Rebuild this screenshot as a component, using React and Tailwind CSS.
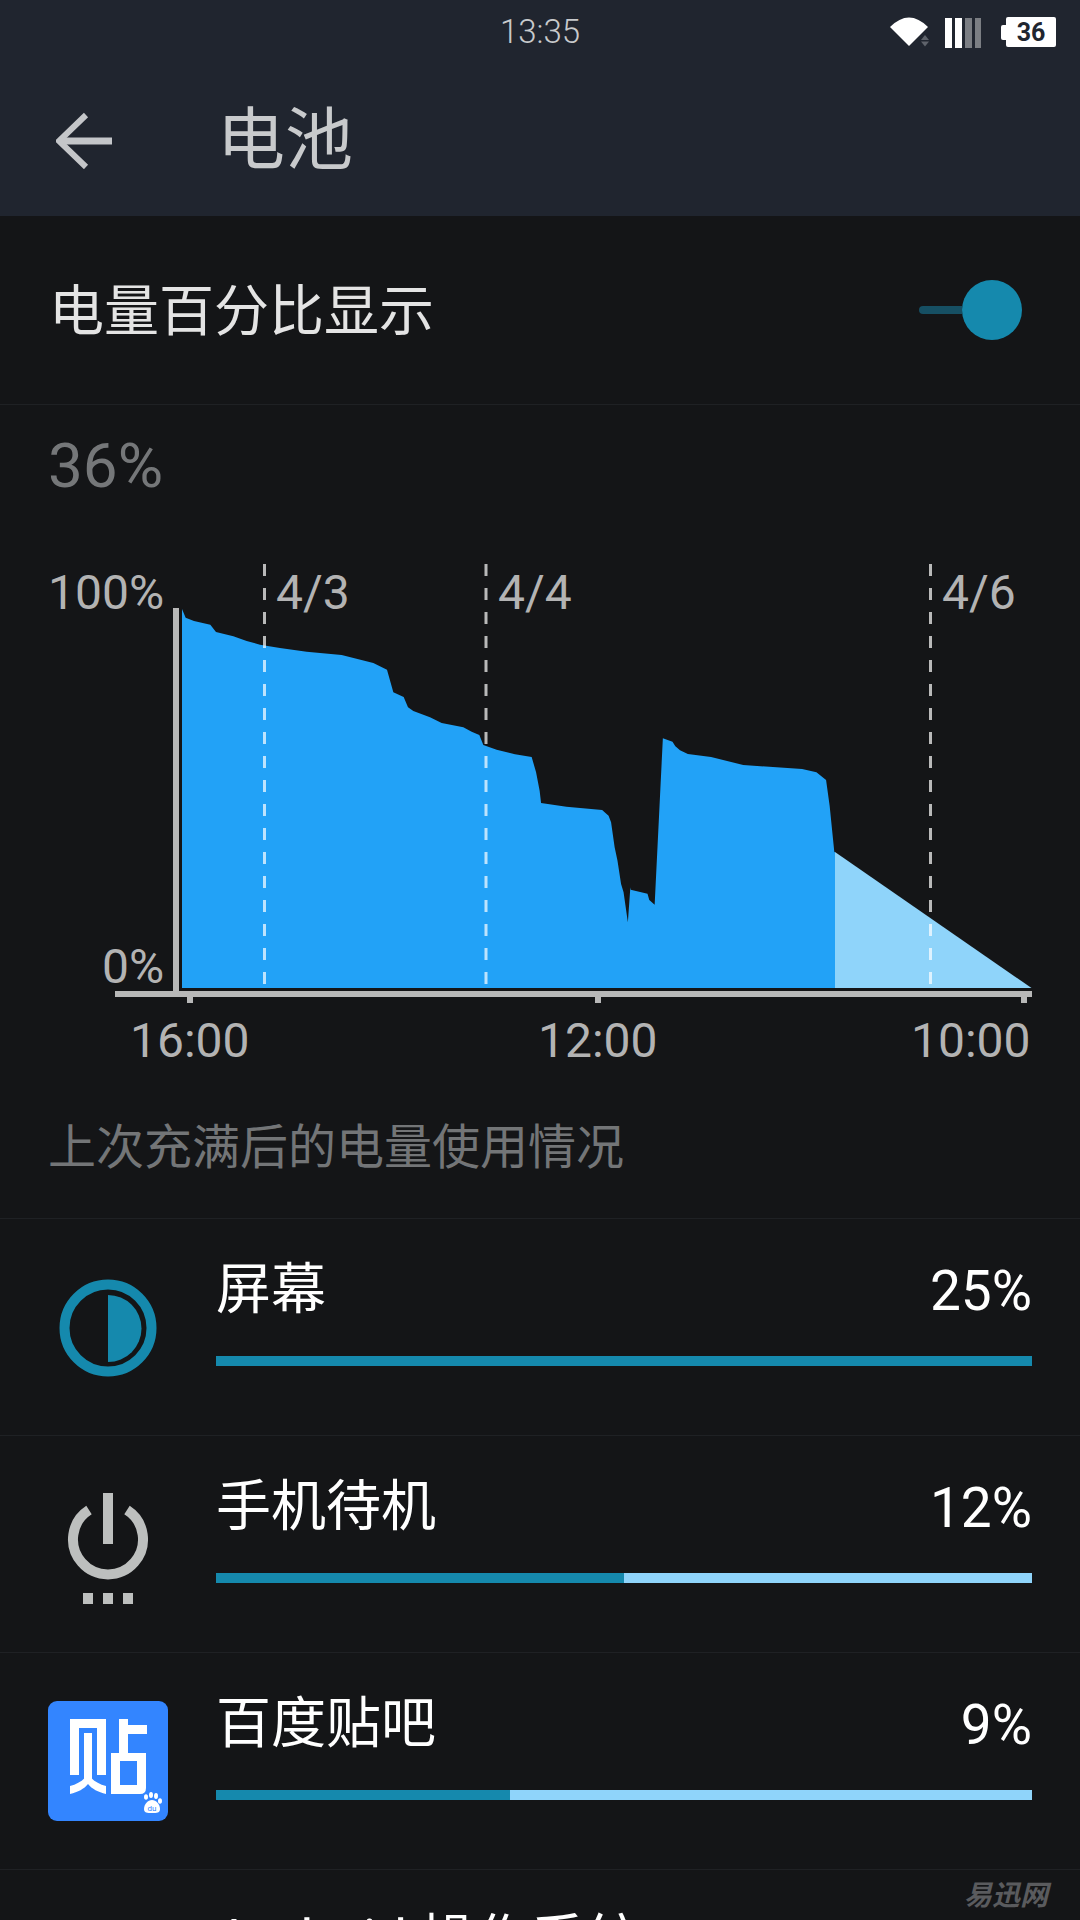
const left = [[456,210],[467,236],[492,246],[541,257],[558,279],[610,292],[650,306],[690,317],[750,327],[830,338],[935,348],[1030,372],[1071,392],[1090,460],[1121,474],[1134,505],[1150,516],[1200,535],[1235,552],[1300,565],[1325,578],[1348,588],[1360,618],[1400,632],[1455,646],[1505,654]];
const right = [[45,700],[55,755],[59,792],[130,803],[230,813],[248,830],[255,850],[265,925],[273,965],[283,1035],[290,1060],[302,1150],[309,1045],[310,1052],[357,1064],[362,1083],[377,1097],[400,598],[427,608],[435,622],[448,634],[470,645],[535,654],[625,678],[790,690],[830,700],[857,723],[867,800],[880,938],[882,940]];
const pts = [
  ...left.map(([x, y]) => [30 + x / 3, 540 + y / 3]),
  ...right.map(([x, y]) => [520 + x / 2.8, 540 + y / 3]),
  [835, 989],
  [182, 989],
].map((p) => p.join(",")).join(" ");

const font = "font-['Roboto','Noto_Sans_CJK_SC',sans-serif]";

function Back() {
  return (
    <svg width="56" height="58" viewBox="0 0 56 58" className="shrink-0">
      <path d="M56 30H4" stroke="#c4c6c9" strokeWidth="7" fill="none" />
      <path d="M30 4 L3 30 L30 56" stroke="#c4c6c9" strokeWidth="6" fill="none" />
    </svg>
  );
}

function StatusIcons() {
  return (
    <div className="flex items-start justify-end pr-[24px] pt-[17px]">
      <svg width="40" height="30" viewBox="0 0 40 30" className="shrink-0">
        <path d="M0 10 Q19 -9 38 10 L19 29 Z" fill="#fff" />
        <path d="M35 18 L39 23 L31 23 Z" fill="#5f636b" />
        <path d="M31 24.500 L39 24.500 L35 29.500 Z" fill="#5f636b" />
      </svg>
      <svg width="36" height="30" viewBox="0 0 36 30" className="ml-[15px] mt-[1px] shrink-0">
        <rect x="0" width="7" height="30" fill="#fff" />
        <rect x="10" width="7" height="30" fill="#fff" />
        <rect x="20" width="7" height="30" fill="#7b7e83" />
        <rect x="30" width="6" height="30" fill="#7b7e83" />
      </svg>
      <div className="ml-[20px] flex items-center">
        <div className="h-[15px] w-[5px] rounded-l-[2px] bg-white" />
        <div className="flex h-[30px] w-[50px] items-center justify-center rounded-[2px] bg-white font-['Roboto',sans-serif] text-[25px] font-bold leading-none text-[#20252f]">
          36
        </div>
      </div>
    </div>
  );
}

function Chart() {
  const lines = [264.5, 486, 930.5];
  return (
    <div className="relative h-[530px] w-full">
      <svg width="1080" height="530" viewBox="0 540 1080 530" className="block">
        <polygon points={pts} fill="#22a2f7" />
        <polygon points="835,853 1031.500,989 835,989" fill="#8fd4fa" />
        {lines.map((x) => (
          <line key={x} x1={x} x2={x} y1="565" y2="985" stroke="#ffffff" strokeOpacity="0.7" strokeWidth="3" strokeDasharray="12 12" />
        ))}
        <rect x="173" y="609" width="6" height="388" fill="#b8b8b8" />
        <rect x="115" y="992" width="917" height="6" fill="#b8b8b8" />
        <rect x="187" y="998" width="6" height="6" fill="#b8b8b8" />
        <rect x="595" y="998" width="6" height="6" fill="#b8b8b8" />
        <rect x="1021" y="998" width="6" height="6" fill="#b8b8b8" />
      </svg>
      <span className="absolute left-[48px] top-[30px] text-[48px] leading-[48px] text-[#b3b3b3]">100%</span>
      <span className="absolute left-[102px] top-[404px] text-[48px] leading-[48px] text-[#b3b3b3]">0%</span>
      <span className="absolute left-[276px] top-[30px] text-[48px] leading-[48px] text-[#b3b3b3]">4/3</span>
      <span className="absolute left-[498px] top-[30px] text-[48px] leading-[48px] text-[#b3b3b3]">4/4</span>
      <span className="absolute left-[942px] top-[30px] text-[48px] leading-[48px] text-[#b3b3b3]">4/6</span>
      <span className="absolute left-[130px] top-[478px] text-[48px] leading-[48px] text-[#b3b3b3]">16:00</span>
      <span className="absolute left-[538px] top-[478px] text-[48px] leading-[48px] text-[#b3b3b3]">12:00</span>
      <span className="absolute left-[911px] top-[478px] text-[48px] leading-[48px] text-[#b3b3b3]">10:00</span>
    </div>
  );
}

function ScreenIcon() {
  return (
    <svg width="120" height="120" viewBox="0 0 120 120" className="shrink-0">
      <circle cx="60" cy="61" r="43.500" fill="none" stroke="#1589ad" strokeWidth="10" />
      <path d="M60 28 A33.500 33.500 0 0 1 60 95 Z" fill="#1589ad" />
    </svg>
  );
}

function PowerIcon() {
  return (
    <svg width="120" height="120" viewBox="0 0 120 120" className="shrink-0">
      <path d="M41 26 A35 35 0 1 0 79 26" fill="none" stroke="#bdbfbe" strokeWidth="10" />
      <rect x="55" y="9" width="10" height="51" fill="#bdbfbe" />
      <rect x="35" y="109" width="10" height="11" fill="#bdbfbe" />
      <rect x="55" y="109" width="10" height="11" fill="#bdbfbe" />
      <rect x="75" y="109" width="10" height="11" fill="#bdbfbe" />
    </svg>
  );
}

function TiebaIcon() {
  return (
    <svg width="120" height="120" viewBox="0 0 120 120" className="shrink-0">
      <rect width="120" height="120" rx="9" fill="#3385ff" />
      <path d="M22 18 H58 V74 H49 V27 H31 V74 H22 Z" fill="#fff" />
      <rect x="36" y="32" width="8" height="50" fill="#fff" />
      <path d="M22 93 V85 C30 83 36 79 40 73 C44 79 50 83 58 85 V93 C50 91 44 88 40 83 C36 88 30 91 22 93 Z" fill="#fff" />
      <rect x="71" y="18" width="9" height="38" fill="#fff" />
      <rect x="80" y="24" width="19" height="9" fill="#fff" />
      <path d="M63 52 H98 V87 Q98 93 92 93 H63 Z M72 60 V84 H89 V60 Z" fill="#fff" fillRule="evenodd" />
      <ellipse cx="98" cy="96" rx="2" ry="2.800" fill="#fff" />
      <ellipse cx="103" cy="94" rx="2" ry="3" fill="#fff" />
      <ellipse cx="108" cy="95" rx="2" ry="3" fill="#fff" />
      <ellipse cx="112" cy="100" rx="2" ry="2.800" fill="#fff" />
      <path d="M96 108 C96 103 100 99 104 99 C108 99 112 103 112 108 C112 112 109 112 104 112 C99 112 96 112 96 108 Z" fill="#fff" />
      <text x="104" y="110" textAnchor="middle" fontSize="8" fontFamily="Roboto, sans-serif" fill="#3385ff">du</text>
    </svg>
  );
}

function Row({ icon, title, pct, split }) {
  return (
    <div className="flex h-[217px] shrink-0 items-center border-t border-[#1f2124] pl-[48px] pr-[48px]">
      {icon}
      <div className="ml-[48px] flex min-w-0 flex-1 flex-col self-stretch pt-[38px]">
        <div className="flex h-[64px] items-center justify-between text-[55px] leading-[64px] text-white">
          <span>{title}</span>
          {pct && <span className="translate-y-[2px]">{pct}</span>}
        </div>
        {pct && (
          <div className="mt-[35px] flex h-[10px] bg-[#8fd4fa]">
            <div className={split}></div>
          </div>
        )}
      </div>
    </div>
  );
}

export default function App() {
  return (
    <div className={`relative flex h-[1920px] w-[1080px] flex-col overflow-hidden bg-[#141517] ${font}`}>
      <header className="h-[216px] shrink-0 bg-[#20252f]">
        <div className="grid h-[64px] grid-cols-[1fr_auto_1fr]">
          <div />
          <div className="pt-[13px] text-[33px] font-light leading-[38px] text-[#c8cacc]">13:35</div>
          <StatusIcons />
        </div>
        <div className="flex h-[152px] items-center pl-[56px]">
          <Back />
          <div className="ml-[105px] translate-y-[1px] text-[68px] leading-[76px] text-[#c8cacc]">电池</div>
        </div>
      </header>

      <div className="flex h-[189px] shrink-0 items-center justify-between border-b border-[#1f2124] pl-[49px] pr-[58px]">
        <span className="translate-y-[1px] text-[55px] leading-[64px] text-[#e4e4e4]">电量百分比显示</span>
        <div className="flex items-center">
          <div className="h-[8px] w-[43px] rounded-l-full bg-[#164f63]" />
          <div className="h-[60px] w-[60px] rounded-full bg-[#1589ad]" />
        </div>
      </div>

      <div className="h-[134px] shrink-0 pl-[48px] pt-[25px] text-[62px] leading-[72px] text-[#757779]">36%</div>

      <Chart />

      <div className="h-[149px] shrink-0 pl-[48px] pt-[47px] text-[48px] leading-[64px] text-[#737577]">
        上次充满后的电量使用情况
      </div>

      <Row icon={<ScreenIcon />} title="屏幕" pct="25%" split="w-full bg-[#1589ad]" />
      <Row icon={<PowerIcon />} title="手机待机" pct="12%" split="w-1/2 bg-[#1589ad]" />
      <Row icon={<TiebaIcon />} title="百度贴吧" pct="9%" split="w-[294px] bg-[#1589ad]" />
      <Row icon={<div className="h-[120px] w-[120px] shrink-0" />} title="Android 操作系统" />

      <div className="absolute left-[964px] top-[1880px] text-[28px] font-bold italic leading-[32px] text-[#5a5b5e]">易迅网</div>
    </div>
  );
}
